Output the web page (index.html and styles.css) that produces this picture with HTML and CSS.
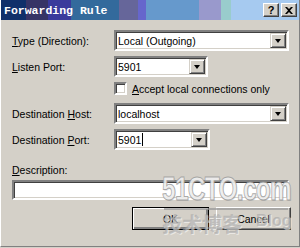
FILE: index.html
```html
<!DOCTYPE html>
<html lang="en">
<head>
    <meta charset="UTF-8">
    <title>Forwarding Rule</title>
    <link rel="stylesheet" href="styles.css">
</head>
<body>
    <div class="window">
        <div class="titlebar">
            <span class="title">Forwarding Rule</span>
            <div class="caption-buttons">
                <span class="cap-btn">?</span>
                <span class="cap-btn">
                    <svg width="8" height="7" viewBox="0 0 8 7"><path d="M0 0h2l2 2 2-2h2L5 3.5 8 7H6L4 5 2 7H0l3-3.5z" fill="#000"/></svg>
                </span>
            </div>
        </div>

        <div class="content">
            <div class="row">
                <label class="label"><u>T</u>ype (Direction):</label>
                <div class="combo wide"><span class="value">Local (Outgoing)</span><span class="drop"></span></div>
            </div>
            <div class="row">
                <label class="label"><u>L</u>isten Port:</label>
                <div class="combo narrow"><span class="value">5901</span><span class="drop"></span></div>
            </div>
            <div class="row check-row">
                <span class="checkbox"></span>
                <span><u>A</u>ccept local connections only</span>
            </div>
            <div class="row">
                <label class="label">Destination <u>H</u>ost:</label>
                <div class="combo wide"><span class="value">localhost</span><span class="drop"></span></div>
            </div>
            <div class="row">
                <label class="label">Destination <u>P</u>ort:</label>
                <div class="combo narrow port"><span class="value">5901<span class="caret"></span></span><span class="drop"></span></div>
            </div>

            <div class="desc">
                <label><u>D</u>escription:</label>
                <div class="textbox"></div>
            </div>

            <div class="actions">
                <button class="btn default">OK</button>
                <button class="btn">Cancel</button>
            </div>
        </div>

        <div class="watermark">
            <div class="wm-site">51CTO.com</div>
            <div class="wm-line"></div>
            <div class="wm-blog"><span class="wm-cn">技术博客</span><span class="wm-en">Blog</span></div>
        </div>
    </div>
</body>
</html>
```

FILE: styles.css
```css
body {
    margin: 0;
    background: #d4d0c8;
    font-family: 'Liberation Sans', Arial, sans-serif;
    font-size: 10.5px;
    color: #000;
}
.window {
    position: relative;
    width: 298px;
    height: 246px;
    background: #d4d0c8;
    border-left: 1px solid #ffffff;
    border-right: 1px solid #808080;
    border-bottom: 1px solid #808080;
    box-shadow: 1px 1px 0 #404040;
    overflow: hidden;
}
.titlebar {
    height: 20px;
    display: flex;
    align-items: center;
    justify-content: space-between;
    padding: 0 2px 0 3px;
    background: linear-gradient(to right,
        #10306a 0, #10306a 25px,
        #363466 25px, #363466 47px,
        #3a3a9c 47px, #3a3a9c 70px,
        #336a9c 70px, #336a9c 118px,
        #66669a 118px, #66669a 137px,
        #6666cc 137px, #6666cc 145px,
        #6699cc 145px, #6699cc 198px,
        #9999cc 198px, #9999cc 220px,
        #99cccc 220px, #99cccc 230px,
        #a6caf0 230px);
}
.title {
    color: #fff;
    font-family: 'Liberation Mono', 'Courier New', monospace;
    font-weight: bold;
    font-size: 11.5px;
    padding-top: 1px;
}
.caption-buttons {
    display: flex;
    gap: 2px;
}
.cap-btn {
    width: 14px;
    height: 12px;
    display: flex;
    align-items: center;
    justify-content: center;
    background: #d4d0c8;
    border: 1px solid;
    border-color: #fff #404040 #404040 #fff;
    box-shadow: inset -1px -1px 0 #808080;
    font-weight: bold;
    font-size: 11px;
}
.content {
    padding: 10px 0 0 11px;
}
.row {
    display: flex;
    align-items: center;
    height: 21px;
    margin-bottom: 5px;
}
.label {
    width: 102px;
}
.combo {
    height: 17px;
    display: flex;
    align-items: center;
    background: #fff;
    border: 2px solid;
    border-color: #808080 #fff #fff #808080;
    box-shadow: inset 1px 1px 0 #404040, inset -1px -1px 0 #d4d0c8;
}
.combo.wide { width: 171px; }
.combo.narrow { width: 90px; }
.combo.port { width: 92px; }
.value {
    flex: 1;
    padding-left: 2px;
    display: flex;
    align-items: center;
}
.caret {
    width: 1px;
    height: 13px;
    background: #000;
    margin-left: 1px;
}
.drop {
    width: 14px;
    height: 13px;
    margin-right: 1px;
    background: #d4d0c8;
    border: 1px solid;
    border-color: #d4d0c8 #404040 #404040 #d4d0c8;
    box-shadow: inset 1px 1px 0 #fff, inset -1px -1px 0 #808080;
    display: flex;
    align-items: center;
    justify-content: center;
}
.drop::after {
    content: "";
    border-left: 3.5px solid transparent;
    border-right: 3.5px solid transparent;
    border-top: 4px solid #000;
}
.check-row {
    padding-left: 102px;
    height: 13px;
    margin-top: 2px;
    margin-bottom: 8px;
}
.checkbox {
    width: 9px;
    height: 9px;
    margin-right: 5px;
    background: #fff;
    border: 2px solid;
    border-color: #808080 #fff #fff #808080;
    box-shadow: inset 1px 1px 0 #404040, inset -1px -1px 0 #d4d0c8;
}
.desc {
    margin-top: 14px;
    line-height: 13px;
}
.textbox {
    width: 273px;
    height: 16px;
    margin-top: 3px;
    background: #fff;
    border: 2px solid;
    border-color: #808080 #fff #fff #808080;
    box-shadow: inset 1px 1px 0 #404040, inset -1px -1px 0 #d4d0c8;
}
.actions {
    display: flex;
    gap: 7px;
    margin-top: 7px;
    padding-left: 120px;
}
.btn {
    width: 75px;
    height: 23px;
    padding: 0;
    font: inherit;
    background: #d4d0c8;
    border: 1px solid;
    border-color: #fff #404040 #404040 #fff;
    box-shadow: inset -1px -1px 0 #808080;
}
.btn.default {
    width: 77px;
    border: 1px solid #000;
    box-shadow: inset 1px 1px 0 #fff, inset -2px -2px 0 #808080;
}
.watermark {
    position: absolute;
    left: 161px;
    top: 170px;
    width: 136px;
    pointer-events: none;
}
.wm-site {
    font-family: 'Liberation Sans', Arial, sans-serif;
    font-weight: bold;
    font-size: 34px;
    line-height: 36px;
    color: rgba(242, 242, 242, 0.88);
    -webkit-text-stroke: 1px rgba(150, 150, 150, 0.8);
    text-shadow: 1px 1px 0 rgba(140, 140, 140, 0.35);
    transform: scaleX(0.72);
    transform-origin: left;
    white-space: nowrap;
    letter-spacing: -1px;
}
.wm-line {
    width: 124px;
    height: 2px;
    margin: 2px 0 0 2px;
    background: rgba(150, 150, 150, 0.7);
}
.wm-blog {
    display: flex;
    align-items: flex-start;
    margin-top: 3px;
    white-space: nowrap;
}
.wm-cn {
    flex-shrink: 0;
    font-family: 'Noto Sans CJK SC', sans-serif;
    font-weight: bold;
    font-size: 20px;
    line-height: 22px;
    color: rgba(165, 165, 165, 0.6);
    text-shadow: 1px 1px 0 rgba(255, 255, 255, 0.5);
}
.wm-en {
    flex-shrink: 0;
    margin-left: 14px;
    font-family: 'Liberation Sans', Arial, sans-serif;
    font-weight: bold;
    font-size: 16px;
    line-height: 16px;
    color: rgba(165, 165, 165, 0.6);
    text-shadow: 1px 1px 0 rgba(255, 255, 255, 0.5);
}
```
